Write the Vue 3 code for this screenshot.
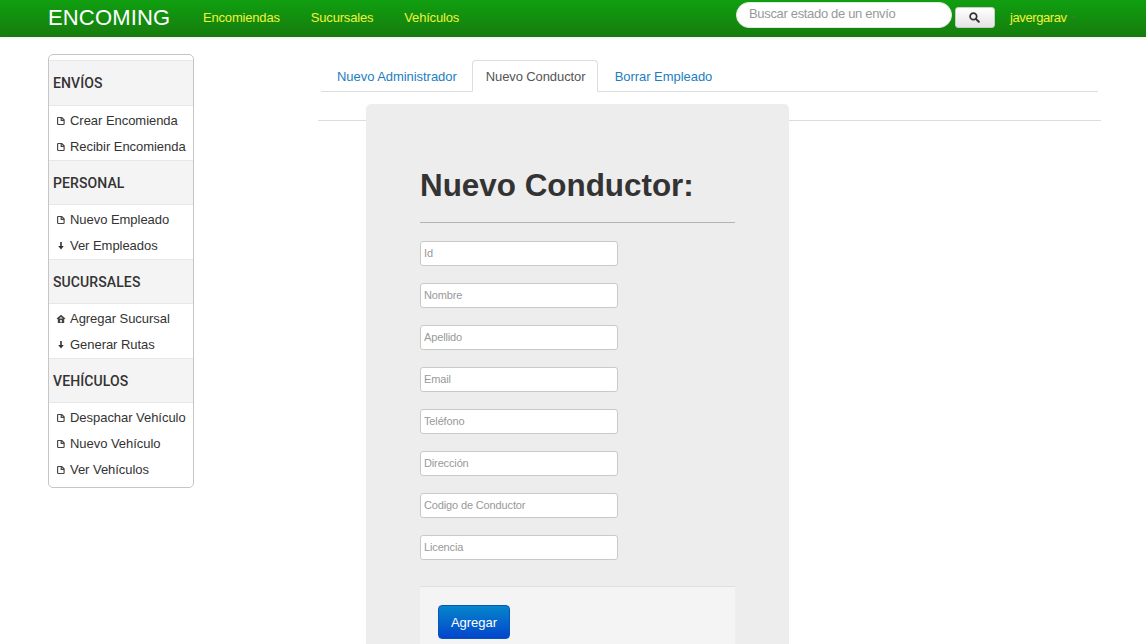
<script setup>
const sections = [
  { title: 'ENVÍOS', items: [['file', 'Crear Encomienda'], ['file', 'Recibir Encomienda']] },
  { title: 'PERSONAL', items: [['file', 'Nuevo Empleado'], ['down', 'Ver Empleados']] },
  { title: 'SUCURSALES', items: [['home', 'Agregar Sucursal'], ['down', 'Generar Rutas']] },
  { title: 'VEHÍCULOS', items: [['file', 'Despachar Vehículo'], ['file', 'Nuevo Vehículo'], ['file', 'Ver Vehículos']] },
]
const fields = ['Id', 'Nombre', 'Apellido', 'Email', 'Teléfono', 'Dirección', 'Codigo de Conductor', 'Licencia']
</script>

<template>
  <div class="page">
    <header class="navbar">
      <a class="brand">ENCOMING</a>
      <nav class="links">
        <a>Encomiendas</a><a>Sucursales</a><a>Vehículos</a>
      </nav>
      <form class="search" @submit.prevent>
        <input type="text" placeholder="Buscar estado de un envío" />
        <button type="submit" aria-label="Buscar">
          <svg width="11" height="11" viewBox="0 0 11 11" fill="none" stroke="#333">
            <circle cx="4.4" cy="4.4" r="3.3" stroke-width="1.7" />
            <path d="M6.9 6.9 9.8 9.8" stroke-width="2" stroke-linecap="round" />
          </svg>
        </button>
      </form>
      <a class="user">javergarav <i class="caret"></i></a>
    </header>

    <div class="body">
      <aside class="sidebar">
        <section v-for="s in sections" :key="s.title">
          <h2>{{ s.title }}</h2>
          <ul>
            <li v-for="[icon, label] in s.items" :key="label">
              <svg width="10" height="10" viewBox="0 0 10 10">
                <path v-if="icon === 'file'" d="M2.2 1.5H5.8L8.1 3.8V7.7Q8.1 8.5 7.3 8.5H2.4Q1.6 8.5 1.6 7.7V2.1Q1.6 1.5 2.2 1.5ZM5.2 1.7V4.3H8" fill="none" stroke="#444" stroke-width="1.15" />
                <path v-else-if="icon === 'down'" d="M4.2 1H5.8V5H7.8L5 8.6 2.2 5H4.2Z" fill="#333" />
                <path v-else fill-rule="evenodd" d="M5 .7 9.4 4.5 8.6 5.3 8.2 5V9H1.8V5L1.4 5.3.6 4.5ZM4.2 6V8.2H5.8V6ZM3.2 4.5H6.8L5 3Z" fill="#444" />
              </svg>
              <a>{{ label }}</a>
            </li>
          </ul>
        </section>
      </aside>

      <main class="main">
        <nav class="tabs">
          <a>Nuevo Administrador</a>
          <a class="active">Nuevo Conductor</a>
          <a>Borrar Empleado</a>
        </nav>
        <div class="content">
          <form class="panel" @submit.prevent>
            <h1>Nuevo Conductor:</h1>
            <input v-for="f in fields" :key="f" type="text" :placeholder="f" />
            <div class="actions"><button type="submit">Agregar</button></div>
          </form>
        </div>
      </main>
    </div>
  </div>
</template>

<style>
body {
  margin: 0;
  background: #fff;
  overflow: hidden;
}
</style>

<style scoped>
* {
  box-sizing: border-box;
}
.page {
  height: 644px;
  overflow: hidden;
  font: 13px/20px "Liberation Sans", Arial, sans-serif;
  color: #333;
}
input,
button {
  font-family: inherit;
  margin: 0;
}
.navbar {
  height: 37px;
  display: flex;
  align-items: flex-start;
  padding-left: 48px;
  background: linear-gradient(#109f10, #167d0d);
  border-bottom: 1px solid #24701c;
  box-shadow: 0 1px 3px rgba(60, 170, 40, 0.15);
}
.brand {
  width: 155px;
  padding-top: 8px;
  font-size: 22px;
  letter-spacing: 0.15px;
  color: #fff;
}
.links {
  width: 533px;
  display: flex;
  gap: 31px;
  padding-top: 8px;
  color: #f2f23a;
  letter-spacing: -0.18px;
}
.search {
  display: flex;
  width: 274px;
  gap: 3px;
  padding-top: 2px;
}
.search input {
  width: 216px;
  height: 26px;
  border: 1px solid #ddeedd;
  border-radius: 14px;
  padding: 0 12px 3px;
  font-size: 13px;
  letter-spacing: -0.33px;
  outline: none;
}
.search button {
  width: 40px;
  height: 21px;
  margin-top: 5px;
  padding: 0 2px 0 0;
  display: flex;
  align-items: center;
  justify-content: center;
  border: 1px solid #c5cfc5;
  border-radius: 3px;
  background: linear-gradient(#fff, #e4e4e4);
}
input::placeholder {
  color: #999;
  opacity: 1;
}
.user {
  padding-top: 8px;
  color: #f2f23a;
  letter-spacing: -0.4px;
  white-space: nowrap;
}
.caret {
  display: inline-block;
  vertical-align: 3px;
  border: 3px solid transparent;
  border-top-color: #31802a;
  border-bottom: 0;
}
.body {
  display: flex;
  align-items: flex-start;
  padding-left: 48px;
}
.sidebar {
  width: 146px;
  height: 434px;
  margin-top: 17px;
  padding-top: 5px;
  border: 1px solid #c6c6c6;
  border-radius: 5px;
}
h2 {
  margin: 0;
  height: 46px;
  padding-left: 4px;
  border: 1px solid #e7e7e7;
  border-width: 1px 0;
  background: #f4f4f4;
  font: 500 14px/44px Roboto, sans-serif;
  letter-spacing: 0.1px;
}
section + section h2 {
  height: 45px;
}
ul {
  margin: 0;
  padding: 2px 0 0 7px;
  list-style: none;
}
li {
  height: 26px;
  display: flex;
  align-items: center;
  gap: 4px;
  white-space: nowrap;
  letter-spacing: -0.04px;
}
li svg {
  flex: none;
}
.main {
  width: 783px;
  margin: 23px 0 0 124px;
}
.tabs {
  display: flex;
  height: 32px;
  margin: 0 3px;
  padding-left: 3px;
  border-bottom: 1px solid #ddd;
  color: #1c7ec0;
}
.tabs a {
  height: 32px;
  padding: 6px 12px;
  border: 1px solid transparent;
  letter-spacing: -0.05px;
  white-space: nowrap;
}
.tabs a + a {
  margin-left: 2px;
}
.tabs .active {
  width: 126px;
  padding-left: 13px;
  letter-spacing: -0.1px;
  color: #555;
  background: #fff;
  border-color: #ddd #ddd #fff;
  border-radius: 4px 4px 0 0;
}
.tabs .active + a {
  margin-left: 4px;
}
.content {
  margin-top: 12px;
  padding-left: 48px;
  background: linear-gradient(#dcdcdc, #dcdcdc) 0 16px / 100% 1px no-repeat;
}
.panel {
  width: 423px;
  height: 640px;
  padding: 54px;
  border-radius: 5px;
  background: #ededed;
}
h1 {
  margin: 0 0 18px;
  height: 65px;
  border-bottom: 1px solid #b3b3b3;
  font-size: 31.4px;
  line-height: 55px;
  white-space: nowrap;
}
.panel input {
  display: block;
  width: 198px;
  height: 25px;
  margin-bottom: 17px;
  padding: 0 3px 2px;
  border: 1px solid #c9c9c9;
  border-radius: 3px;
  background: #fff;
  font-size: 11px;
  letter-spacing: -0.14px;
  outline: none;
}
.actions {
  margin-top: 26px;
  height: 90px;
  padding: 18px;
  border-top: 1px solid #e0e0e0;
  background: #f4f4f4;
}
.actions button {
  width: 72px;
  height: 34px;
  padding: 0;
  border: 1px solid #0a55b8;
  border-radius: 4px;
  background: linear-gradient(#0586cb, #0345cd);
  color: #fff;
  font-size: 13px;
}
</style>
